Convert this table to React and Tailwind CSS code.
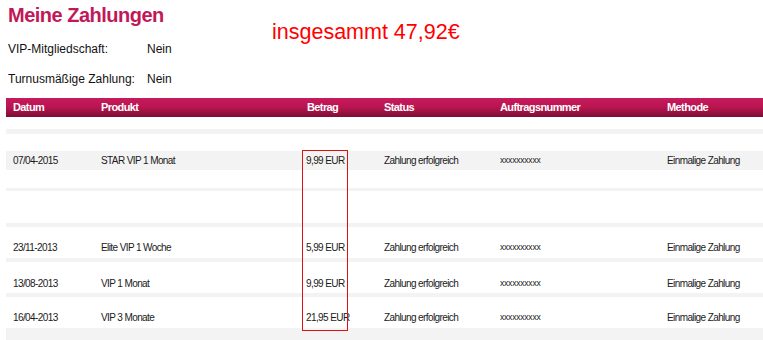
const font = { fontFamily: '"Liberation Sans", Arial, sans-serif' };

const columns = 'grid grid-cols-[88px_206px_77px_116px_167px_1fr] pl-[7px] items-center';

const payments = {
  a: { date: '07/04-2015', product: 'STAR VIP 1 Monat', amount: '9,99 EUR' },
  b: { date: '23/11-2013', product: 'Elite VIP 1 Woche', amount: '5,99 EUR' },
  c: { date: '13/08-2013', product: 'VIP 1 Monat', amount: '9,99 EUR' },
  d: { date: '16/04-2013', product: 'VIP 3 Monate', amount: '21,95 EUR' },
};

// stripes of the (partly blanked) table body, top to bottom
const stripes = [
  { h: 'h-[12px]', bg: 'bg-white' },
  { h: 'h-[5px]', bg: 'bg-[#f3f3f3]' },
  { h: 'h-[17px]', bg: 'bg-white' },
  { h: 'h-[19px]', bg: 'bg-[#f3f3f3]', row: 'a' },
  { h: 'h-[18px]', bg: 'bg-white' },
  { h: 'h-[3px]', bg: 'bg-[#f3f3f3]' },
  { h: 'h-[32px]', bg: 'bg-white' },
  { h: 'h-[4px]', bg: 'bg-[#f3f3f3]' },
  { h: 'h-[10px]', bg: 'bg-white' },
  { h: 'h-[21px]', bg: 'bg-white', row: 'b' },
  { h: 'h-[4px]', bg: 'bg-[#f3f3f3]' },
  { h: 'h-[11px]', bg: 'bg-white' },
  { h: 'h-[20px]', bg: 'bg-white', row: 'c' },
  { h: 'h-[4px]', bg: 'bg-[#f3f3f3]' },
  { h: 'h-[10px]', bg: 'bg-white' },
  { h: 'h-[21px]', bg: 'bg-white', row: 'd' },
  { h: 'h-[13px]', bg: 'bg-[#f3f3f3]' },
];

const PaymentRow = ({ p }) => (
  <div className={`${columns} h-full text-[10px] tracking-[-0.6px] text-[#1a1a1a]`}>
    <span>{p.date}</span>
    <span>{p.product}</span>
    <span className="-ml-px">{p.amount}</span>
    <span>Zahlung erfolgreich</span>
    <span className="text-[8.5px] tracking-[-0.2px]">xxxxxxxxxx</span>
    <span>Einmalige Zahlung</span>
  </div>
);

export default function App() {
  return (
    <div className="relative w-[763px] h-[340px] overflow-hidden bg-white pt-[5px]" style={font}>
      <div className="flex">
        <div className="w-[272px] pl-[8px]">
          <h1 className="text-[20px] leading-[20px] font-bold tracking-[-0.5px] text-[#c21858]">
            Meine Zahlungen
          </h1>
          <div className="mt-[16px] flex text-[12px] leading-[16px] text-[#111]">
            <span className="w-[139px]">VIP-Mitgliedschaft:</span>
            <span>Nein</span>
          </div>
          <div className="mt-[14px] flex text-[12px] leading-[16px] text-[#111]">
            <span className="w-[139px]">Turnusmäßige Zahlung:</span>
            <span>Nein</span>
          </div>
        </div>
        <div className="pt-[15px] text-[21.5px] leading-[24px] text-[#ff0000]">
          insgesammt 47,92€
        </div>
      </div>

      <div className="ml-[6px] mt-[11px]">
        <div className={`${columns} h-[19px] bg-linear-to-b from-[#c81a5e] via-[#b8154f] to-[#7d0e36] text-[11px] font-bold tracking-[-0.6px] text-white`}>
          <span>Datum</span>
          <span>Produkt</span>
          <span>Betrag</span>
          <span>Status</span>
          <span>Auftragsnummer</span>
          <span>Methode</span>
        </div>
        <div className="flex flex-col">
          {stripes.map((s, i) => (
            <div key={i} className={`${s.h} ${s.bg}`}>
              {s.row && <PaymentRow p={payments[s.row]} />}
            </div>
          ))}
        </div>
      </div>

      {/* red marker round the amounts */}
      <div className="absolute left-[302px] top-[150px] w-[46px] h-[181px] border border-[#e01010]" />
    </div>
  );
}
